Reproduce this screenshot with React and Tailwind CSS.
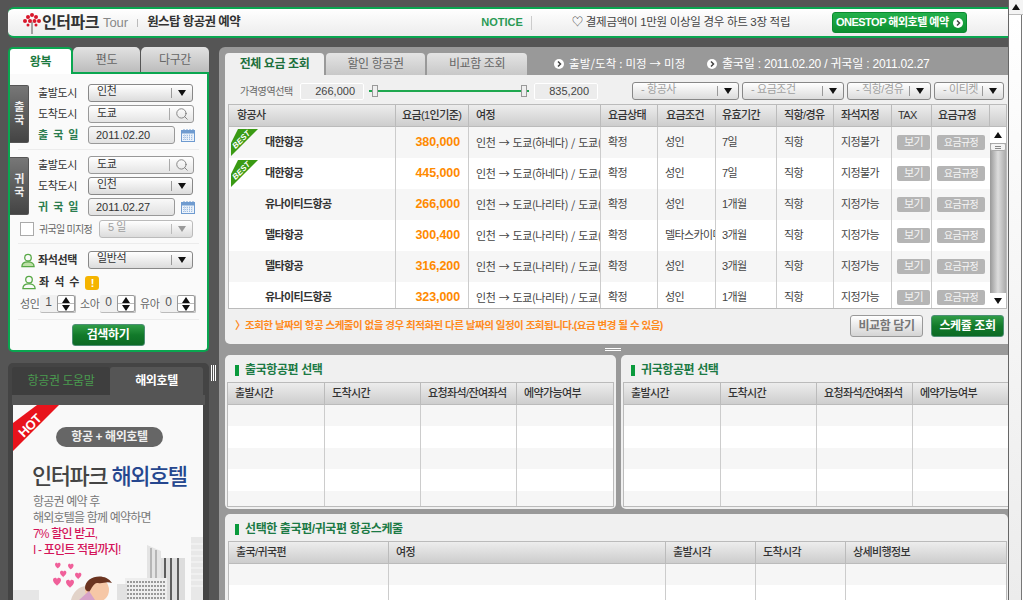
// Interpark Tour one-stop air ticket booking page
import React from 'react';
import { Search } from 'lucide-react';

const fares = [
  { best: true, name: '대한항공', price: '380,000', route: '인천 → 도쿄(하네다) / 도쿄(하네다) → 인천', cond: '성인', term: '7일', seat: '지정불가' },
  { best: true, name: '대한항공', price: '445,000', route: '인천 → 도쿄(하네다) / 도쿄(나리타) → 인천', cond: '성인', term: '7일', seat: '지정불가' },
  { name: '유나이티드항공', price: '266,000', route: '인천 → 도쿄(나리타) / 도쿄(나리타) → 인천', cond: '성인', term: '1개월', seat: '지정가능' },
  { name: '델타항공', price: '300,400', route: '인천 → 도쿄(나리타) / 도쿄(나리타) → 인천', cond: '델타스카이마일', term: '3개월', seat: '지정가능' },
  { name: '델타항공', price: '316,200', route: '인천 → 도쿄(나리타) / 도쿄(나리타) → 인천', cond: '성인', term: '3개월', seat: '지정가능' },
  { name: '유나이티드항공', price: '323,000', route: '인천 → 도쿄(나리타) / 도쿄(나리타) → 인천', cond: '성인', term: '1개월', seat: '지정가능' },
];

const fareHeads = [
  ['항공사', 'pl-[8px]'], ['요금(1인기준)', 'pl-[6px]'], ['여정', 'pl-[7px]'], ['요금상태', 'pl-[7px]'], ['요금조건', 'pl-[8px]'],
  ['유효기간', 'pl-[6px]'], ['직항/경유', 'pl-[7px]'], ['좌석지정', 'pl-[7px]'], ['TAX', 'pl-[6px]'], ['요금규정', 'pl-[6px]'], ['', ''],
];

function Triangle({ muted }) {
  return (
    <svg width="8" height="6" viewBox="0 0 8 6" className="shrink-0">
      <path d="M0 0H8L4 6Z" fill={muted ? '#999' : '#111'} />
    </svg>
  );
}

function SelectBox({ value, width, muted, grey }) {
  return (
    <div className={`flex items-center h-[18px] ${width} rounded-[3px] border border-[#888] bg-linear-to-b from-white to-[#dcdcdc] ${muted ? 'border-[#bbb]' : ''}`}>
      <span className={`flex-1 min-w-0 pl-[8px] pb-[3px] truncate ${muted || grey ? 'text-[#a0a0a0]' : 'text-[#333]'}`}>{value}</span>
      <span className={`h-[10px] w-px ${muted ? 'bg-[#bbb]' : 'bg-[#999]'}`} />
      <span className="flex w-[20px] justify-center"><Triangle muted={muted} /></span>
    </div>
  );
}

function SearchBox({ value }) {
  return (
    <div className="flex items-center h-[18px] w-[106px] rounded-[3px] border border-[#999] bg-linear-to-b from-white to-[#e4e4e4]">
      <span className="flex-1 pl-[8px] pb-[2px] text-[#333]">{value}</span>
      <span className="h-[12px] w-px bg-[#aaa]" />
      <span className="flex w-[23px] justify-center"><Search size={14} strokeWidth={1.5} color="#777" /></span>
    </div>
  );
}

function CalendarIcon() {
  return (
    <svg width="14" height="13" viewBox="0 0 14 13" className="ml-[6px]">
      <rect x="0.5" y="1.5" width="13" height="11" fill="#eef4fb" stroke="#6f9bd0" />
      <rect x="0.5" y="1.5" width="13" height="3" fill="#6f9bd0" />
      <path d="M3 0v2M6 0v2M9 0v2M12 0v2" stroke="#6f9bd0" />
      <path d="M2 6.5h10M2 8.5h10M2 10.5h10M3.5 5.5v6M6 5.5v6M8.500 5.5v6M11 5.5v6" stroke="#8fb3de" strokeWidth="0.8" strokeDasharray="1 1" />
    </svg>
  );
}

function DateBox({ value }) {
  return (
    <div className="flex items-center">
      <div className="flex items-center h-[18px] w-[87px] pl-[7px] rounded-[3px] border border-[#999] bg-linear-to-b from-[#f8f8f8] to-[#e2e2e2] text-[#333] tracking-normal">
        {value}
      </div>
      <CalendarIcon />
    </div>
  );
}

function FormRow({ label, accent, children }) {
  return (
    <div className="flex items-center h-[18px]">
      <span className={`w-[50px] shrink-0 ${accent ? 'text-[#2c7d4f] font-bold tracking-[1px]' : 'text-[#333]'}`}>{label}</span>
      {children}
    </div>
  );
}

function DirectionSection({ dir, dateLabel, from, to, date, fromSearch }) {
  return (
    <div className="flex">
      <div className="flex flex-col items-center justify-center w-[19px] h-[58px] mt-[1px] rounded-r-[2px] border-y border-r border-[#555] bg-linear-to-b from-[#777] to-[#444] font-bold leading-[13px] text-[#eee]">
        <span>{dir[0]}</span>
        <span>{dir[1]}</span>
      </div>
      <div className="flex flex-col gap-[3px] pl-[9px]">
        <FormRow label="출발도시">{fromSearch ? <SearchBox value={from} /> : <SelectBox value={from} width="w-[105px]" />}</FormRow>
        <FormRow label="도착도시">{fromSearch ? <SelectBox value={to} width="w-[105px]" /> : <SearchBox value={to} />}</FormRow>
        <FormRow label={dateLabel} accent><DateBox value={date} /></FormRow>
      </div>
    </div>
  );
}

function Counter({ label, value }) {
  return (
    <div className="flex items-center">
      <span className="w-[20px] text-[#666]">{label}</span>
      <div className="flex h-[18px] w-[36px] border-b border-r border-[#bbb] rounded-[2px] bg-[#f0f0f0]">
        <span className="flex-1 text-center text-[#555] text-[12px] leading-[14px]">{value}</span>
        <div className="flex flex-col w-[18px] rounded-[2px] border border-[#999] bg-white">
          <span className="flex flex-1 items-center justify-center border-b border-[#bbb]"><span className="scale-y-[-1]"><Triangle /></span></span>
          <span className="flex flex-1 items-center justify-center"><Triangle /></span>
        </div>
      </div>
    </div>
  );
}

function PersonIcon({ filled }) {
  return (
    <svg width="16" height="15" viewBox="0 0 16 16" className="shrink-0">
      <circle cx="8" cy="5" r="3.5" fill="none" stroke="#57a845" strokeWidth="1.4" />
      <path d="M1.500 14.500c0-3.500 3-5 6.500-5s6.500 1.500 6.500 5z" fill={filled ? '#bfe0a8' : 'none'} stroke="#57a845" strokeWidth="1.4" />
    </svg>
  );
}

function Separator() {
  return <div className="h-px mx-[8px] bg-[#ececec]" />;
}

function GreenButton({ label, width }) {
  return (
    <div className={`flex items-center justify-center h-[22px] ${width} rounded-[3px] border border-[#4c8f73] bg-linear-to-b from-[#2f9c47] via-[#127a2a] to-[#0c6a24] font-bold text-white text-[12px]`}>
      {label}
    </div>
  );
}

function SearchForm() {
  return (
    <div className="w-[201px] shrink-0">
      <div className="flex h-[27px] text-[12px]">
        <div className="flex w-[65px] items-center justify-center rounded-t-[5px] border-x-2 border-t-2 border-[#0aa650] bg-white font-bold text-[#1c7a3f]">왕복</div>
        <div className="flex flex-1 border-b-2 border-[#0aa650] bg-transparent text-[#666]">
          <div className="flex w-[67px] items-center justify-center rounded-t-[5px] bg-linear-to-b from-[#e2e2e2] to-[#bcbcbc]">편도</div>
          <div className="flex flex-1 items-center justify-center ml-px rounded-t-[5px] bg-linear-to-b from-[#e2e2e2] to-[#bcbcbc]">다구간</div>
        </div>
      </div>
      <div className="h-[278px] rounded-b-[5px] border-x-2 border-b-2 border-[#0aa650] bg-[#fafafa] pt-[10px]">
        <DirectionSection dir="출국" dateLabel="출 국 일" from="인천" to="도쿄" date="2011.02.20" />
        <div className="mt-[5px]"><Separator /></div>
        <div className="mt-[6px]">
          <DirectionSection dir="귀국" dateLabel="귀 국 일" from="도쿄" to="인천" date="2011.02.27" fromSearch />
        </div>
        <div className="flex items-center h-[18px] mt-[4px] pl-[10px]">
          <span className="h-[14px] w-[14px] border border-[#aaa] bg-white" />
          <span className="w-[65px] pl-[5px] text-[10px] tracking-[-0.7px] text-[#666] whitespace-nowrap">귀국일 미지정</span>
          <SelectBox value="5 일" width="w-[94px]" muted />
        </div>
        <div className="mt-[5px]"><Separator /></div>
        <div className="flex items-center h-[18px] mt-[7px] pl-[10px]">
          <PersonIcon filled />
          <span className="w-[52px] pl-[2px] font-bold text-[#333] whitespace-nowrap">좌석선택</span>
          <SelectBox value="일반석" width="w-[105px]" />
        </div>
        <div className="flex items-center h-[18px] mt-[4px] pl-[11px]">
          <PersonIcon />
          <span className="pl-[2px] font-bold text-[#333] tracking-[1px] whitespace-nowrap">좌 석 수</span>
          <span className="flex h-[14px] w-[14px] ml-[5px] mt-[2px] items-center justify-center rounded-[3px] bg-[#f5b400] text-[11px] font-bold leading-none text-white">!</span>
        </div>
        <div className="flex items-center gap-[4px] mt-[4px] pl-[10px]">
          <Counter label="성인" value="1" />
          <Counter label="소아" value="0" />
          <Counter label="유아" value="0" />
        </div>
        <div className="mt-[6px]"><Separator /></div>
        <div className="flex justify-center mt-[4px] pr-[1px]"><GreenButton label="검색하기" width="w-[73px]" /></div>
      </div>
    </div>
  );
}

function Heart({ x, y, s = 1 }) {
  return (
    <path
      transform={`translate(${x} ${y}) scale(${s})`}
      d="M0 2C0-1 4-1 4 1.500 4-1 8-1 8 2 8 5 4 7 4 8 4 7 0 5 0 2Z"
      fill="#f0609a"
    />
  );
}

function HotelArt() {
  return (
    <svg width="190" height="66" viewBox="0 0 190 66" className="block">
      <rect x="0" y="56" width="26" height="10" fill="#e6e6e6" />
      <rect x="178" y="3" width="12" height="63" fill="#e8e8e8" />
      <path d="M178 10h12M178 16h12M178 22h12M178 28h12M178 34h12M178 40h12M178 46h12M178 52h12" stroke="#f8f8f8" strokeWidth="1" />
      <path d="M134 11l14 6v49h-14z" fill="#e4e4e4" />
      <path d="M138 14v52M143 16v50" stroke="#888" strokeWidth="1" />
      <rect x="148" y="24" width="24" height="42" fill="#ddd" />
      <path d="M152 24v42M158 24v42M165 24v42" stroke="#333" strokeWidth="1.500" />
      <path d="M112 44h42v22h-42z" fill="#eee" />
      <path d="M114 48h38M114 52h38M114 56h38M114 60h38M114 64h38" stroke="#444" strokeWidth="1.200" strokeDasharray="2 1" />
      <rect x="104" y="50" width="10" height="16" fill="#e2e2e2" />
      <Heart x="42" y="29" s="0.7" />
      <Heart x="55" y="30" s="0.7" />
      <Heart x="47" y="37" s="0.8" />
      <Heart x="62" y="39" s="0.8" />
      <Heart x="40" y="44" />
      <Heart x="53" y="46" />
      <path d="M58 66c2-8 8-14 16-14l6 14z" fill="#e2d3c9" />
      <circle cx="84" cy="56" r="12" fill="#f6c7a6" />
      <path d="M72 54c0-12 20-16 27-5-6-2-9 1-14 0-4-1-6 5-9 9-2-1-4-2-4-4z" fill="#6b3420" />
      <path d="M66 66l10-9 6 9z" fill="#d6a2c8" />
    </svg>
  );
}

function AdPanel() {
  return (
    <div className="flex items-start w-[201px] shrink-0 mt-[11px]">
      <div className="h-[237px] w-[201px] shrink-0 overflow-hidden rounded-t-[5px] bg-[#444] pt-[4px] pl-[4px]">
        <div className="flex h-[28px] w-[191px] text-[12px]">
          <div className="flex w-[98px] items-center justify-center rounded-t-[3px] bg-[#3e3e3e] text-[#4a9a4f]">항공권 도움말</div>
          <div className="flex flex-1 items-center justify-center rounded-t-[3px] bg-[#555] font-bold text-white">해외호텔</div>
        </div>
        <div className="h-[10px] w-[193px] bg-[#555]" />
        <div className="relative w-[190px] ml-px h-[195px] overflow-hidden bg-[#f9f9f9]">
          <svg width="50" height="50" viewBox="0 0 50 50" className="absolute left-0 top-0">
            <path d="M24 0H46L0 46V18Z" fill="#e8131c" />
          </svg>
          <span className="absolute left-[4px] top-[11px] -rotate-45 text-[13px] font-bold text-white">HOT</span>
          <div className="flex flex-col items-start">
            <div className="flex h-[20px] w-[107px] ml-[43px] mt-[22px] items-center justify-center rounded-full bg-[#666] text-[12px] font-bold text-[#eee]">항공 + 해외호텔</div>
            <div className="ml-[19px] mt-[16px] text-[22px] font-medium leading-[28px] tracking-[-1.5px] text-[#444] whitespace-nowrap">
              인터파크 <span className="text-[#26478f]">해외호텔</span>
            </div>
            <div className="ml-[20px] mt-[3px] text-[12px] leading-[16px] tracking-[-0.8px] text-[#777]">
              <div>항공권 예약 후</div>
              <div>해외호텔을 함께 예약하면</div>
              <div className="font-medium text-[#d4145a]">7% 할인 받고,</div>
              <div className="font-medium text-[#d4145a]">I - 포인트 적립까지!</div>
            </div>
          </div>
          <div className="absolute bottom-0 left-0"><HotelArt /></div>
        </div>
      </div>
      <div className="flex gap-px h-[16px] mt-[2px] ml-[2px] shrink-0">
        <span className="w-px bg-white" /><span className="w-px bg-white" /><span className="w-px bg-white" />
      </div>
    </div>
  );
}

function BulletIcon() {
  return (
    <svg width="10" height="10" viewBox="0 0 10 10" className="shrink-0">
      <circle cx="5" cy="5" r="5" fill="#fff" />
      <path d="M4 2.500L6.500 5 4 7.500" fill="none" stroke="#444" strokeWidth="1.500" />
    </svg>
  );
}

function FareTabs() {
  const tabClass = 'flex w-[99px] items-center justify-center rounded-t-[4px] bg-linear-to-b from-[#e4e4e4] to-[#c8c8c8] text-[#666]';
  return (
    <div className="flex h-[22px] mt-[6px] ml-[6px] text-[12px]">
      <div className="flex w-[99px] items-center justify-center rounded-t-[4px] bg-[#f0f0f0] font-bold text-[#1c6f3c]">전체 요금 조회</div>
      <div className={`${tabClass} ml-[2px]`}>할인 항공권</div>
      <div className={`${tabClass} ml-[2px] w-[100px]`}>비교함 조회</div>
      <div className="flex items-center pl-[27px] text-white">
        <BulletIcon />
        <span className="pl-[5px] w-[143px] font-['Noto_Sans_CJK_KR',sans-serif] text-[11.500px] tracking-[0.15px] whitespace-nowrap">출발/도착 : 미정 → 미정</span>
        <BulletIcon />
        <span className="pl-[5px] whitespace-nowrap tracking-[-0.2px]">출국일 : 2011.02.20 / 귀국일 : 2011.02.27</span>
      </div>
    </div>
  );
}

function PriceBox({ value }) {
  return (
    <div className="flex h-[17px] w-[64px] items-center justify-end pr-[8px] rounded-[2px] border border-white bg-[#ececec] text-[#444] tracking-normal">
      {value}
    </div>
  );
}

function FilterRow() {
  return (
    <div className="flex items-center h-[18px] mt-[7px] pl-[15px]">
      <span className="w-[60px] text-[#666] text-[10px]">가격영역선택</span>
      <PriceBox value="266,000" />
      <div className="relative flex w-[160px] ml-[5px] items-center h-[14px]">
        <div className="h-[2px] w-full bg-[#1fa84f]" />
        <span className="absolute left-[3px] top-[1px] h-[12px] w-[6px] border border-[#999] bg-[#eee]" />
        <span className="absolute right-[2px] top-[1px] h-[12px] w-[6px] border border-[#999] bg-[#eee]" />
      </div>
      <div className="ml-[5px]"><PriceBox value="835,200" /></div>
      <div className="flex gap-[3px] ml-[34px]">
        <SelectBox value="- 항공사" width="w-[107px]" grey />
        <SelectBox value="- 요금조건" width="w-[102px]" grey />
        <SelectBox value="- 직항/경유" width="w-[84px]" grey />
        <SelectBox value="- 이티켓" width="w-[70px]" grey />
      </div>
    </div>
  );
}

function GridHead({ heads, template }) {
  return (
    <div className={`grid ${template} h-[22px] bg-linear-to-b from-[#ededed] to-[#cdcdcd] border-b border-[#bbb] font-medium text-[#333] text-[11px] tracking-[-0.6px]`}>
      {heads.map(([label, pad], i) => (
        <div key={i} className={`flex items-center ${pad} border-r border-[#bbb] last:border-r-0 whitespace-nowrap`}>{label}</div>
      ))}
    </div>
  );
}

function FareRow({ fare, idx }) {
  const cell = 'flex items-center border-r border-[#ccc] overflow-hidden whitespace-nowrap';
  return (
    <div className={`relative grid grid-cols-[167px_73px_132px_57px_58px_61px_57px_58px_40px_58px] h-[31px] shrink-0 text-[#444] tracking-[-0.6px] ${idx % 2 === 0 ? 'bg-[#f6f6f6]' : 'bg-white'}`}>
      {fare.best && (
        <>
          <svg width="27" height="27" viewBox="0 0 27 27" className="absolute left-[2px] top-[2px]">
            <path d="M7 0H27L0 27V14Z" fill="#3a9a14" />
          </svg>
          <span className="absolute left-[2px] top-[7px] -rotate-45 font-bold italic text-[8px] tracking-normal text-white">BEST</span>
        </>
      )}
      <div className={`${cell} pl-[36px] font-bold text-[#333]`}>{fare.name}</div>
      <div className={`${cell} justify-end pr-[8px] text-[12.500px] font-bold tracking-[-0.1px] text-[#ff8a00]`}>{fare.price}</div>
      <div className={`${cell} pl-[7px] font-['Noto_Sans_CJK_KR',sans-serif] tracking-[-0.35px] [word-spacing:1px]`}>{fare.route}</div>
      <div className={`${cell} pl-[7px]`}>확정</div>
      <div className={`${cell} pl-[7px]`}>{fare.cond}</div>
      <div className={`${cell} pl-[6px]`}>{fare.term}</div>
      <div className={`${cell} pl-[7px]`}>직항</div>
      <div className={`${cell} pl-[7px]`}>{fare.seat}</div>
      <div className={`${cell} pl-[5px]`}>
        <span className="flex h-[15px] w-[33px] items-center justify-center rounded-[2px] bg-[#b5b5b5] text-[#f4f4f4]">보기</span>
      </div>
      <div className="flex items-center pl-[5px]">
        <span className="flex h-[15px] w-[48px] items-center justify-center rounded-[2px] bg-[#b5b5b5] text-[10px] text-[#f4f4f4]">요금규정</span>
      </div>
    </div>
  );
}

function TableScrollbar() {
  return (
    <div className="flex flex-col w-[16px] h-[181px] shrink-0 bg-linear-to-r from-[#999] via-[#ddd] to-[#aaa]">
      <div className="flex h-[16px] items-center justify-center bg-white"><span className="scale-y-[-1]"><Triangle /></span></div>
      <div className="flex flex-col justify-center gap-px h-[8px] px-[4px] rounded-[2px] border border-[#aaa] bg-[#f4f4f4]">
        <span className="h-px bg-[#888]" /><span className="h-px bg-[#888]" />
      </div>
      <div className="flex-1" />
      <div className="flex h-[15px] items-center justify-center bg-white"><Triangle /></div>
    </div>
  );
}

function FarePanel() {
  return (
    <div className="h-[269px] ml-[6px] rounded-bl-[5px] bg-[#f0f0f0] overflow-hidden">
      <FilterRow />
      <div className="h-[205px] w-[779px] mt-[4px] ml-[3px] border border-[#bbb] overflow-hidden bg-white">
        <GridHead heads={fareHeads} template="grid-cols-[167px_73px_132px_57px_58px_61px_57px_58px_40px_58px_16px]" />
        <div className="flex h-[181px]">
          <div className="flex flex-col w-[761px] overflow-hidden">
            {fares.map((fare, idx) => <FareRow key={idx} fare={fare} idx={idx} />)}
          </div>
          <TableScrollbar />
        </div>
      </div>
      <div className="flex items-center h-[22px] mt-[6px] pl-[10px] pr-[4px]">
        <span className="flex-1 font-bold text-[10.500px] tracking-[-0.5px] text-[#ff8a1e] whitespace-nowrap">〉조회한 날짜의 항공 스케줄이 없을 경우 최적화된 다른 날짜의 일정이 조회됩니다.(요금 변경 될 수 있음)</span>
        <div className="flex h-[22px] w-[73px] items-center justify-center rounded-[3px] border border-[#999] bg-linear-to-b from-white to-[#d4d4d4] font-bold text-[12px] text-[#777]">비교함 담기</div>
        <div className="ml-[8px]"><GreenButton label="스케쥴 조회" width="w-[73px]" /></div>
      </div>
    </div>
  );
}

function EmptyRows({ count, template, columns }) {
  return Array.from({ length: count }).map((_, r) => (
    <div key={r} className={`grid ${template} h-[21.4px] ${r % 2 === 0 ? 'bg-[#f6f6f6]' : 'bg-white'}`}>
      {Array.from({ length: columns }).map((_, c) => (
        <div key={c} className="border-r border-[#ccc] last:border-r-0" />
      ))}
    </div>
  ));
}

function SectionTitle({ label, className }) {
  return (
    <div className={`flex items-center font-bold text-[12px] text-[#1c7a45] ${className}`}>
      <span className="h-[11px] w-[4px] mr-[6px] bg-[#0a9a3c]" />
      {label}
    </div>
  );
}

function FlightPanel({ title, width, tableWidth, template, right }) {
  const heads = ['출발시간', '도착시간', '요청좌석/잔여좌석', '에약가능여부'];
  return (
    <div className={`h-[154px] ${width} ${right ? 'rounded-l-[5px]' : 'rounded-[5px]'} bg-[#f0f0f0] overflow-hidden`}>
      <SectionTitle label={title} className="h-[14px] mt-[8px] ml-[10px]" />
      <div className={`${tableWidth} h-[125px] mt-[5px] ml-[2px] border border-[#bbb] bg-white overflow-hidden`}>
        <GridHead heads={heads.map((h) => [h, 'pl-[7px]'])} template={template} />
        <EmptyRows count={5} template={template} columns={4} />
      </div>
    </div>
  );
}

function SchedulePanel() {
  const template = 'grid-cols-[160px_277px_90px_90px_161px]';
  const heads = ['출국/귀국편', '여정', '출발시각', '도착시각', '상세비행정보'];
  return (
    <div className="h-[90px] mt-[5px] ml-[6px] rounded-t-[5px] bg-[#f0f0f0] overflow-hidden">
      <SectionTitle label="선택한 출국편/귀국편 항공스케줄" className="h-[14px] mt-[8px] ml-[10px]" />
      <div className="w-[779px] h-[80px] mt-[5px] ml-[3px] border border-[#bbb] bg-white overflow-hidden">
        <GridHead heads={heads.map((h) => [h, 'pl-[7px]'])} template={template} />
        <EmptyRows count={2} template={template} columns={5} />
      </div>
    </div>
  );
}

function PageScrollbar() {
  return (
    <div className="flex flex-col w-[16px] h-[600px] shrink-0 border-l border-[#666] bg-white">
      <div className="flex w-[14px] h-[15px] items-center justify-center bg-[#f4f4f4] border-b border-[#bbb]"><span className="scale-y-[-1]"><Triangle /></span></div>
      <div className="flex-1 w-[13px] border-r border-[#777] bg-linear-to-b from-white to-[#ececec]" />
    </div>
  );
}

export default function App() {
  return (
    <div className="flex h-[600px] w-[1024px] overflow-hidden bg-[#555] text-[11px] tracking-[-0.4px] font-['Liberation_Sans','Noto_Sans_CJK_KR',sans-serif]">
      <div className="w-[1008px] shrink-0">
        <div className="flex items-center h-[31px] mt-[7px] ml-[8px] rounded-l-[6px] border-y-2 border-[#0aa650] bg-linear-to-b from-white to-[#ececec]">
          <svg width="20" height="22" viewBox="0 0 20 22" className="ml-[14px] shrink-0">
            <path d="M10 10v12" stroke="#888" strokeWidth="1.500" />
            <g fill="#d9172b">
              <circle cx="10" cy="3" r="2" /><circle cx="6" cy="5" r="2" /><circle cx="14" cy="5" r="2" />
              <circle cx="3" cy="9" r="2" /><circle cx="17" cy="9" r="2" /><circle cx="8" cy="9" r="2" /><circle cx="12.500" cy="9" r="2" />
              <circle cx="6" cy="13" r="1.500" /><circle cx="14" cy="13" r="1.500" />
            </g>
          </svg>
          <span className="text-[16px] font-bold text-[#333] tracking-[-0.5px] whitespace-nowrap">인터파크</span>
          <span className="pl-[4px] text-[13px] text-[#888] tracking-normal">Tour</span>
          <span className="h-[8px] w-px ml-[9px] bg-[#bbb]" />
          <span className="w-[343px] pl-[9px] text-[12.500px] font-bold text-[#333] tracking-[-0.6px] whitespace-nowrap">원스탑 항공권 예약</span>
          <span className="text-[11px] font-bold text-[#2a9a55] tracking-normal">NOTICE</span>
          <span className="h-[14px] w-px ml-[8px] bg-[#ccc]" />
          <span className="w-[300px] pl-[40px] text-[11.500px] text-[#444] tracking-[-0.3px] whitespace-nowrap">♡ 결제금액이 1만원 이상일 경우 하트 3장 적립</span>
          <div className="flex h-[21px] w-[135px] items-center justify-center gap-[4px] rounded-[3px] border border-[#0a8a30] bg-linear-to-b from-[#22b04a] to-[#0a9030] font-bold text-white text-[11px] tracking-[-0.5px] whitespace-nowrap">
            ONESTOP 해외호텔 예약
            <BulletIcon />
          </div>
        </div>
        <div className="flex gap-[10px] mt-[9px] ml-[8px]">
          <div className="flex flex-col">
            <SearchForm />
            <AdPanel />
          </div>
          <div className="w-[789px] h-[553px] shrink-0 rounded-tl-[6px] bg-[#999] overflow-hidden">
            <FareTabs />
            <FarePanel />
            <div className="flex justify-center h-[11px] pt-[4px] pr-[2px]">
              <div className="flex flex-col gap-px w-[16px]"><span className="h-px bg-white" /><span className="h-px bg-white" /></div>
            </div>
            <div className="flex gap-[5px] ml-[6px]">
              <FlightPanel title="출국항공편 선택" width="w-[391px]" tableWidth="w-[387px]" template="grid-cols-[97px_96px_96px_96px]" />
              <FlightPanel title="귀국항공편 선택" width="w-[387px]" tableWidth="w-[386px]" template="grid-cols-[97px_96px_96px_95px]" right />
            </div>
            <SchedulePanel />
          </div>
        </div>
      </div>
      <PageScrollbar />
    </div>
  );
}
